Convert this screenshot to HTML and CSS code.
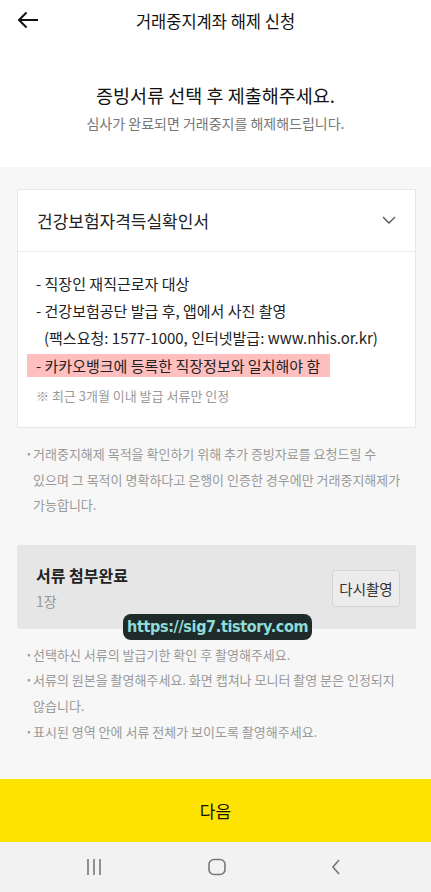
FILE: index.html
```html
<!DOCTYPE html>
<html>
  <head>
    <title>거래중지계좌 해제 신청</title>
    <meta charset="utf-8" />
    <link rel="stylesheet" href="styles.css">
  </head>
  <body>
    <div class="screen">
      <div class="top">
        <div class="header">
          <svg class="back" width="22" height="18" viewBox="0 0 22 18">
            <path d="M21 9H2M9.5 1.5L2 9l7.5 7.5" fill="none" stroke="#111" stroke-width="2"/>
          </svg>
          <h1>거래중지계좌 해제 신청</h1>
        </div>
        <div class="intro">
          <h2>증빙서류 선택 후 제출해주세요.</h2>
          <p>심사가 완료되면 거래중지를 해제해드립니다.</p>
        </div>
      </div>

      <div class="main">
        <div class="card">
          <div class="card-head">
            <span>건강보험자격득실확인서</span>
            <svg width="14" height="9" viewBox="0 0 14 9">
              <path d="M1 1l6 6 6-6" fill="none" stroke="#555" stroke-width="1.4"/>
            </svg>
          </div>
          <div class="card-body">
            <div class="item">- 직장인 재직근로자 대상</div>
            <div class="item">- 건강보험공단 발급 후, 앱에서 사진 촬영</div>
            <div class="item indent">(팩스요청: 1577-1000, 인터넷발급: www.nhis.or.kr)</div>
            <div class="item warn"><span class="mark">- 카카오뱅크에 등록한 직장정보와 일치해야 함</span></div>
            <div class="note">※ 최근 3개월 이내 발급 서류만 인정</div>
          </div>
        </div>

        <ul class="bullets first">
          <li>거래중지해제 목적을 확인하기 위해 추가 증빙자료를 요청드릴 수 있으며 그 목적이 명확하다고 은행이 인증한 경우에만 거래중지해제가 가능합니다.</li>
        </ul>

        <div class="attach">
          <div class="attach-info">
            <strong>서류 첨부완료</strong>
            <span>1장</span>
          </div>
          <button class="retake">다시촬영</button>
          <div class="watermark">https://sig7.tistory.com</div>
        </div>

        <ul class="bullets">
          <li>선택하신 서류의 발급기한 확인 후 촬영해주세요.</li>
          <li>서류의 원본을 촬영해주세요. 화면 캡쳐나 모니터 촬영 분은 인정되지 않습니다.</li>
          <li>표시된 영역 안에 서류 전체가 보이도록 촬영해주세요.</li>
        </ul>
      </div>

      <button class="next">다음</button>

      <div class="navbar">
        <svg width="16" height="18" viewBox="0 0 16 18">
          <path d="M2 1v16M8 1v16M14 1v16" stroke="#777" stroke-width="1.6"/>
        </svg>
        <svg width="18" height="18" viewBox="0 0 18 18">
          <rect x="1" y="1.5" width="16" height="15" rx="5" fill="none" stroke="#777" stroke-width="1.6"/>
        </svg>
        <svg width="10" height="18" viewBox="0 0 10 18">
          <path d="M8 2L2 9l6 7" fill="none" stroke="#777" stroke-width="1.6"/>
        </svg>
      </div>
    </div>
  </body>
</html>
```
FILE: styles.css
```css
body {
	margin: 0;
	padding: 0;
	font-family: "Noto Sans CJK KR", "Noto Sans", sans-serif;
	color: #222;
	background: #f7f7f7;
}

.screen {
	width: 431px;
	height: 892px;
	display: flex;
	flex-direction: column;
	overflow: hidden;
}

/* Header */

.top {
	background: #fff;
	height: 167px;
}

.header {
	position: relative;
	height: 42px;
	display: flex;
	align-items: center;
	justify-content: center;
}

.back {
	position: absolute;
	left: 17px;
	top: 11px;
}

h1 {
	margin: 0;
	font-size: 16.5px;
	font-weight: 400;
	color: #111;
}

.intro {
	text-align: center;
	padding-top: 38px;
}

.intro h2 {
	margin: 0;
	font-size: 18.5px;
	font-weight: 400;
	line-height: 30px;
	color: #111;
}

.intro p {
	margin: 2px 0 0;
	font-size: 14px;
	line-height: 22px;
	color: #777;
}

/* Main */

.main {
	flex: 1;
	padding: 22px 15px 0 17px;
}

.card {
	background: #fff;
	border: 1px solid #e8e8e8;
}

.card-head {
	height: 61px;
	display: flex;
	align-items: center;
	justify-content: space-between;
	padding: 0 19px 0 19px;
	border-bottom: 1px solid #ececec;
	font-size: 17px;
	color: #222;
}

.card-body {
	padding: 18px 19px 20px 18px;
}

.item {
	font-size: 15px;
	line-height: 27px;
	color: #222;
}

.item.indent {
	padding-left: 8px;
}

.item.warn {
	margin-top: 1px;
}

.mark {
	display: inline-block;
	background: #ffbfbf;
	margin-left: -9px;
	padding: 0 10px 0 9px;
	line-height: 23px;
}

.note {
	margin-top: 6px;
	font-size: 13px;
	line-height: 22px;
	color: #999;
}

.bullets {
	list-style: none;
	margin: 0;
	padding: 0 6px 0 0;
}

.bullets li {
	position: relative;
	padding-left: 16px;
	font-size: 13px;
	line-height: 25.6px;
	color: #999;
	word-break: keep-all;
}

.bullets li:before {
	content: "·";
	position: absolute;
	left: 8px;
	top: 0;
	font-weight: 700;
}

.bullets.first {
	margin: 13px 0 27px;
}

/* Attach */

.attach {
	position: relative;
	display: flex;
	align-items: center;
	justify-content: space-between;
	height: 84px;
	margin-bottom: 13px;
	padding: 0 16px 0 19px;
	background: #e6e6e6;
	border-radius: 2px;
}

.attach-info {
	display: flex;
	flex-direction: column;
	padding-top: 2px;
}

.attach-info strong {
	font-size: 16px;
	line-height: 26px;
	font-weight: 700;
	color: #222;
}

.attach-info span {
	font-size: 14px;
	line-height: 26px;
	color: #999;
}

.retake {
	width: 68px;
	height: 37px;
	padding: 0;
	margin-top: 3px;
	background: #ececec;
	border: 1px solid #d4d4d4;
	border-radius: 3px;
	font-family: inherit;
	font-size: 14.5px;
	color: #333;
}

.watermark {
	position: absolute;
	left: 106px;
	top: 69px;
	padding: 0 4px;
	height: 26px;
	line-height: 26px;
	background: #1f2b2b;
	border-radius: 8px;
	font-family: "DejaVu Sans Condensed", "DejaVu Sans", sans-serif;
	font-weight: 700;
	font-size: 16px;
	letter-spacing: -0.35px;
	color: #8fdcd8;
}

/* Bottom */

.next {
	height: 63px;
	border: none;
	padding: 0;
	background: #ffe300;
	font-family: inherit;
	font-size: 17px;
	color: #111;
}

.navbar {
	height: 50px;
	display: flex;
	align-items: center;
	justify-content: space-between;
	padding: 0 90px 0 86px;
	background: #f2f2f2;
}
```
